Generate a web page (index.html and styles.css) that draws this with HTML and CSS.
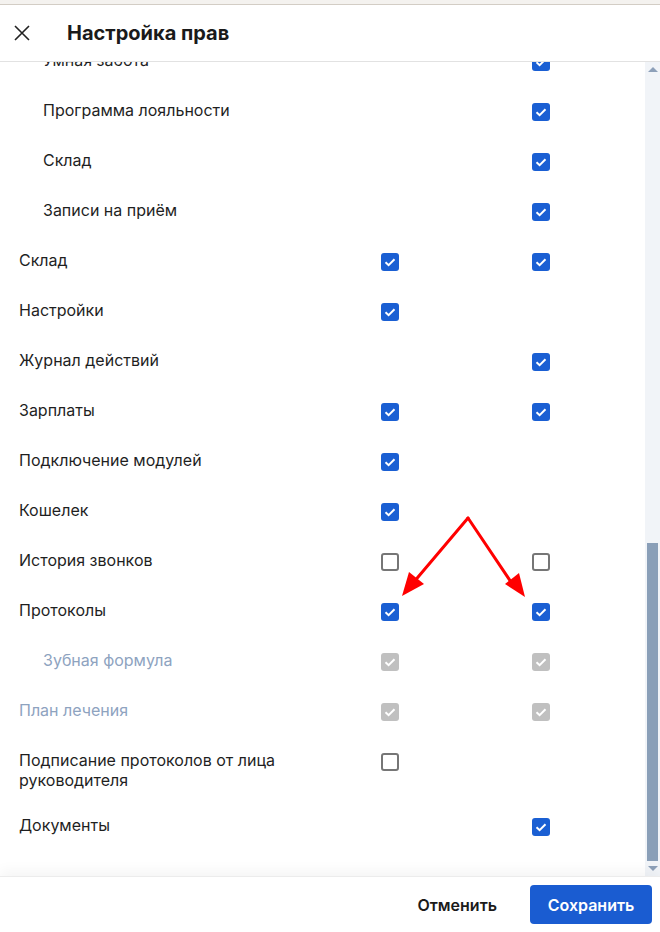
FILE: index.html
```html
<!DOCTYPE html>
<html lang="ru">
<head>
<meta charset="utf-8">
<title>Настройка прав</title>
<link rel="stylesheet" href="styles.css">
</head>
<body>
<div class="page">
  <div class="topstrip"></div>
  <header class="header">
    <button class="close" aria-label="Закрыть">
      <svg width="16" height="16" viewBox="0 0 16 16"><path d="M1 1L15 15M15 1L1 15" stroke="#222" stroke-width="1.6" fill="none"/></svg>
    </button>
    <h1 class="title">Настройка прав</h1>
  </header>
  <div class="body">
    <div class="list">
      <div class="row row--sub"><span class="label">Умная забота</span><span></span><span></span><span class="cb cb--on"><svg viewBox="0 0 18 18"><polyline points="4.5,9.3 7.6,12.2 13.5,6.2"/></svg></span></div>
      <div class="row row--sub"><span class="label">Программа лояльности</span><span></span><span></span><span class="cb cb--on"><svg viewBox="0 0 18 18"><polyline points="4.5,9.3 7.6,12.2 13.5,6.2"/></svg></span></div>
      <div class="row row--sub"><span class="label">Склад</span><span></span><span></span><span class="cb cb--on"><svg viewBox="0 0 18 18"><polyline points="4.5,9.3 7.6,12.2 13.5,6.2"/></svg></span></div>
      <div class="row row--sub"><span class="label">Записи на приём</span><span></span><span></span><span class="cb cb--on"><svg viewBox="0 0 18 18"><polyline points="4.5,9.3 7.6,12.2 13.5,6.2"/></svg></span></div>
      <div class="row"><span class="label">Склад</span><span class="cb cb--on"><svg viewBox="0 0 18 18"><polyline points="4.5,9.3 7.6,12.2 13.5,6.2"/></svg></span><span></span><span class="cb cb--on"><svg viewBox="0 0 18 18"><polyline points="4.5,9.3 7.6,12.2 13.5,6.2"/></svg></span></div>
      <div class="row"><span class="label">Настройки</span><span class="cb cb--on"><svg viewBox="0 0 18 18"><polyline points="4.5,9.3 7.6,12.2 13.5,6.2"/></svg></span><span></span><span></span></div>
      <div class="row"><span class="label">Журнал действий</span><span></span><span></span><span class="cb cb--on"><svg viewBox="0 0 18 18"><polyline points="4.5,9.3 7.6,12.2 13.5,6.2"/></svg></span></div>
      <div class="row"><span class="label">Зарплаты</span><span class="cb cb--on"><svg viewBox="0 0 18 18"><polyline points="4.5,9.3 7.6,12.2 13.5,6.2"/></svg></span><span></span><span class="cb cb--on"><svg viewBox="0 0 18 18"><polyline points="4.5,9.3 7.6,12.2 13.5,6.2"/></svg></span></div>
      <div class="row"><span class="label">Подключение модулей</span><span class="cb cb--on"><svg viewBox="0 0 18 18"><polyline points="4.5,9.3 7.6,12.2 13.5,6.2"/></svg></span><span></span><span></span></div>
      <div class="row"><span class="label">Кошелек</span><span class="cb cb--on"><svg viewBox="0 0 18 18"><polyline points="4.5,9.3 7.6,12.2 13.5,6.2"/></svg></span><span></span><span></span></div>
      <div class="row"><span class="label">История звонков</span><span class="cb"></span><span></span><span class="cb"></span></div>
      <div class="row"><span class="label">Протоколы</span><span class="cb cb--on"><svg viewBox="0 0 18 18"><polyline points="4.5,9.3 7.6,12.2 13.5,6.2"/></svg></span><span></span><span class="cb cb--on"><svg viewBox="0 0 18 18"><polyline points="4.5,9.3 7.6,12.2 13.5,6.2"/></svg></span></div>
      <div class="row row--sub row--disabled"><span class="label">Зубная формула</span><span class="cb cb--off"><svg viewBox="0 0 18 18"><polyline points="4.5,9.3 7.6,12.2 13.5,6.2"/></svg></span><span></span><span class="cb cb--off"><svg viewBox="0 0 18 18"><polyline points="4.5,9.3 7.6,12.2 13.5,6.2"/></svg></span></div>
      <div class="row row--disabled"><span class="label">План лечения</span><span class="cb cb--off"><svg viewBox="0 0 18 18"><polyline points="4.5,9.3 7.6,12.2 13.5,6.2"/></svg></span><span></span><span class="cb cb--off"><svg viewBox="0 0 18 18"><polyline points="4.5,9.3 7.6,12.2 13.5,6.2"/></svg></span></div>
      <div class="row row--tall"><span class="label">Подписание протоколов от лица руководителя</span><span class="cb"></span><span></span><span></span></div>
      <div class="row"><span class="label">Документы</span><span></span><span></span><span class="cb cb--on"><svg viewBox="0 0 18 18"><polyline points="4.5,9.3 7.6,12.2 13.5,6.2"/></svg></span></div>
    </div>
    <div class="scrollbar">
      <div class="sb-btn"><span class="tri tri--up"></span></div>
      <div class="sb-track"><div class="sb-thumb"></div></div>
      <div class="sb-btn"><span class="tri tri--down"></span></div>
    </div>
  </div>
  <footer class="footer">
    <button class="btn btn--text">Отменить</button>
    <button class="btn btn--primary">Сохранить</button>
  </footer>
  <svg class="arrows" width="660" height="932" viewBox="0 0 660 932">
    <g stroke="#ff0000" stroke-width="3" fill="none" stroke-linecap="round">
      <line x1="468" y1="518" x2="413" y2="583"/>
      <line x1="468" y1="518" x2="513" y2="585"/>
    </g>
    <g fill="#ff0000">
      <polygon points="402,596 409,572 424,584"/>
      <polygon points="525,597 505,584 519,573"/>
    </g>
  </svg>
</div>
</body>
</html>
```

FILE: styles.css
```css
* { box-sizing: border-box; }
html, body { margin: 0; padding: 0; background: #fff; }
body {
  font-family: Inter, "Noto Sans", Roboto, sans-serif;
  color: #1f1f1f;
  font-size: 16px;
}
.page {
  position: relative;
  width: 660px;
  height: 932px;
  display: flex;
  flex-direction: column;
  overflow: hidden;
}
.topstrip {
  height: 5px;
  flex-shrink: 0;
  background: #f4f2ef;
  border-bottom: 1px solid #d3cdc5;
}
.header {
  height: 57px;
  flex-shrink: 0;
  display: flex;
  align-items: center;
  padding-left: 14px;
  border-bottom: 1px solid #e2e2e2;
}
.close {
  width: 16px;
  height: 16px;
  padding: 0;
  border: 0;
  background: none;
  display: flex;
  margin-right: 37px;
}
.title {
  margin: 0;
  font-size: 20px;
  font-weight: 700;
  color: #1a1a1a;
}
.body {
  flex: 1;
  display: flex;
  min-height: 0;
}
.list {
  flex: 1;
  display: flex;
  flex-direction: column;
  justify-content: flex-end;
  overflow: hidden;
  padding-bottom: 25px;
}
.row {
  flex-shrink: 0;
  display: grid;
  grid-template-columns: 362px 18px 133px 18px;
  align-items: start;
  height: 50px;
  padding: 15px 0 0 19px;
}
.label {
  padding-right: 20px;
  line-height: 18px;
}
.row--tall {
  height: 65px;
  padding-top: 14px;
}
.row--tall .label { line-height: 20px; }
.row--tall .cb { margin-top: 3px; }
.row--sub .label { padding-left: 24px; }
.row--disabled .label { color: #8ea3bf; }
.cb {
  width: 18px;
  height: 18px;
  margin-top: 2px;
  border: 2px solid #767676;
  border-radius: 3px;
  display: block;
}
.cb svg { display: none; }
.cb--on, .cb--off { border: 0; }
.cb--on { background: #1a5fd3; }
.cb--off { background: #c0c0c0; }
.cb--on svg, .cb--off svg {
  display: block;
  width: 18px;
  height: 18px;
  fill: none;
  stroke: #fff;
  stroke-width: 2;
}
.scrollbar {
  width: 15px;
  flex-shrink: 0;
  background: #f1f4f8;
  display: flex;
  flex-direction: column;
}
.sb-btn {
  height: 15px;
  display: flex;
  align-items: center;
  justify-content: center;
}
.tri {
  width: 0;
  height: 0;
  border-left: 5px solid transparent;
  border-right: 5px solid transparent;
}
.tri--up { border-bottom: 5px solid #8da0b9; }
.tri--down { border-top: 5px solid #8da0b9; }
.sb-track {
  flex: 1;
  display: flex;
  flex-direction: column;
  justify-content: flex-end;
  padding: 0 2px;
}
.sb-thumb {
  height: 318px;
  background: #8a9fb8;
}
.footer {
  position: relative;
  height: 56px;
  flex-shrink: 0;
  display: flex;
  justify-content: flex-end;
  align-items: center;
  padding-right: 8px;
  gap: 16px;
  background: #fff;
  border-top: 1px solid #ececec;
  box-shadow: 0 -6px 12px rgba(0, 0, 0, 0.04);
}
.btn {
  font-family: Inter, "Noto Sans", Roboto, sans-serif;
  height: 39px;
  border: 0;
  border-radius: 4px;
  font-size: 16px;
  cursor: pointer;
}
.btn--text {
  background: none;
  color: #1a1a1a;
  font-weight: 600;
  padding: 0 17px;
}
.btn--primary {
  width: 122px;
  background: #1a5cd1;
  color: #fff;
  font-weight: 600;
  font-size: 16px;
}
.arrows {
  position: absolute;
  left: 0;
  top: 0;
  pointer-events: none;
}
```
